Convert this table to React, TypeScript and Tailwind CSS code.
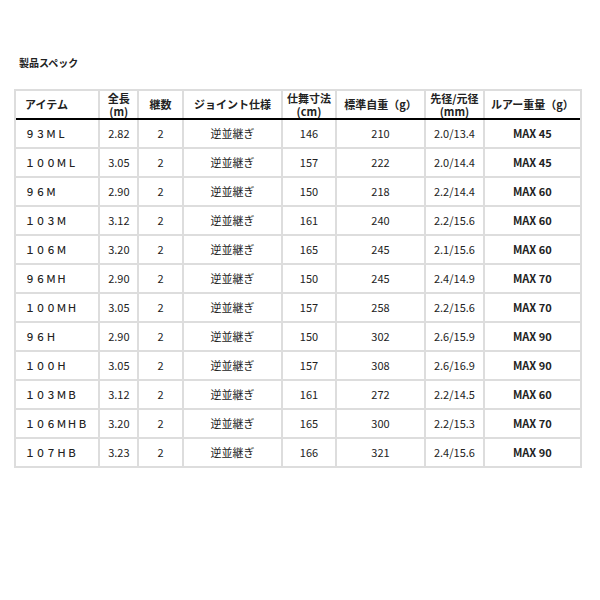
const rows = [
  ["９３ＭＬ", "2.82", "2", "逆並継ぎ", "146", "210", "2.0/13.4", "MAX 45"],
  ["１００ＭＬ", "3.05", "2", "逆並継ぎ", "157", "222", "2.0/14.4", "MAX 45"],
  ["９６Ｍ", "2.90", "2", "逆並継ぎ", "150", "218", "2.2/14.4", "MAX 60"],
  ["１０３Ｍ", "3.12", "2", "逆並継ぎ", "161", "240", "2.2/15.6", "MAX 60"],
  ["１０６Ｍ", "3.20", "2", "逆並継ぎ", "165", "245", "2.1/15.6", "MAX 60"],
  ["９６ＭＨ", "2.90", "2", "逆並継ぎ", "150", "245", "2.4/14.9", "MAX 70"],
  ["１００ＭＨ", "3.05", "2", "逆並継ぎ", "157", "258", "2.2/15.6", "MAX 70"],
  ["９６Ｈ", "2.90", "2", "逆並継ぎ", "150", "302", "2.6/15.9", "MAX 90"],
  ["１００Ｈ", "3.05", "2", "逆並継ぎ", "157", "308", "2.6/16.9", "MAX 90"],
  ["１０３ＭＢ", "3.12", "2", "逆並継ぎ", "161", "272", "2.2/14.5", "MAX 60"],
  ["１０６ＭＨＢ", "3.20", "2", "逆並継ぎ", "165", "300", "2.2/15.3", "MAX 70"],
  ["１０７ＨＢ", "3.23", "2", "逆並継ぎ", "166", "321", "2.4/15.6", "MAX 90"],
];

const widths = ["w-[85px]", "w-[39px]", "w-[45px]", "w-[100px]", "w-[54px]", "w-[90px]", "w-[59px]", "w-[96px]"];

const headers = [
  ["アイテム"],
  ["全長", "(m)"],
  ["継数"],
  ["ジョイント仕様"],
  ["仕舞寸法", "(cm)"],
  ["標準自重（g）"],
  ["先径/元径", "(mm)"],
  ["ルアー重量（g）"],
];

export default function App() {
  return (
    <div className="w-[600px] h-[600px] bg-white text-[#222] font-['Noto_Sans_CJK_JP',sans-serif]">
      <div className="pt-[57px] pl-[19px] text-[10px] font-bold leading-[11px]">製品スペック</div>
      <div className="ml-[14px] mt-[21px] w-[568px] border-2 border-[#dddddd]">
        <div className="flex border-b-2 border-black">
          {headers.map((h, i) => (
            <div
              key={i}
              className={`${widths[i]} h-[27px] flex items-center text-[11px] font-bold leading-[13px] whitespace-nowrap ${
                i === 0 ? "justify-start pl-[9px]" : "justify-center text-center"
              } ${i < 7 ? "border-r-2 border-[#dddddd]" : ""}`}
            >
              <p>
                {h[0]}
                {h[1] && (
                  <>
                    <br />
                    {h[1]}
                  </>
                )}
              </p>
            </div>
          ))}
        </div>
        {rows.map((r, ri) => (
          <div key={ri} className={`flex ${ri < rows.length - 1 ? "border-b-2 border-[#dddddd]" : ""}`}>
            {r.map((c, i) => (
              <div
                key={i}
                className={`${widths[i]} h-[27px] flex items-center whitespace-nowrap ${
                  i === 0 ? "pl-[9px] text-[10px] tracking-[0.5px] font-medium" : "justify-center text-[11px]"
                } ${i === 7 ? "font-semibold" : ""} ${i < 7 ? "border-r-2 border-[#dddddd]" : ""}`}
              >
                {c}
              </div>
            ))}
          </div>
        ))}
      </div>
    </div>
  );
}
